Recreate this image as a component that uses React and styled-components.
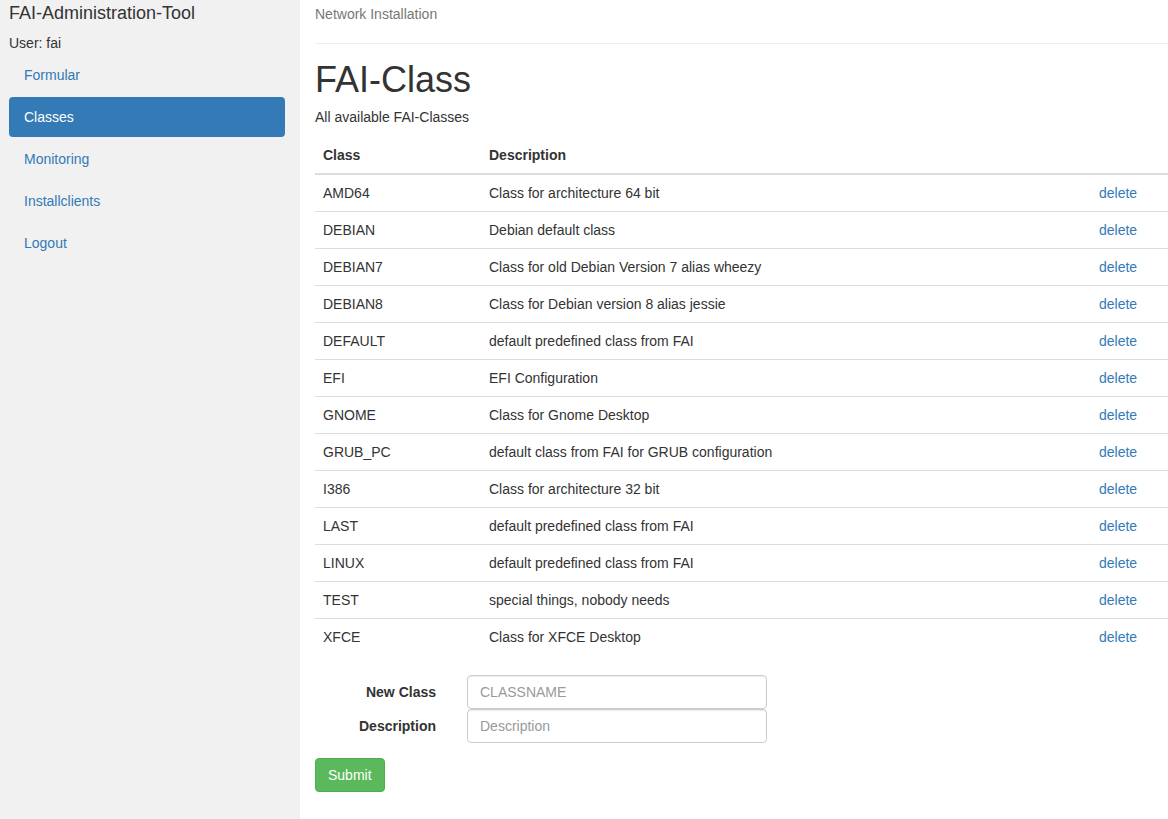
import React from 'react'
import styled, { createGlobalStyle } from 'styled-components'

const classes = [
  ['AMD64', 'Class for architecture 64 bit'],
  ['DEBIAN', 'Debian default class'],
  ['DEBIAN7', 'Class for old Debian Version 7 alias wheezy'],
  ['DEBIAN8', 'Class for Debian version 8 alias jessie'],
  ['DEFAULT', 'default predefined class from FAI'],
  ['EFI', 'EFI Configuration'],
  ['GNOME', 'Class for Gnome Desktop'],
  ['GRUB_PC', 'default class from FAI for GRUB configuration'],
  ['I386', 'Class for architecture 32 bit'],
  ['LAST', 'default predefined class from FAI'],
  ['LINUX', 'default predefined class from FAI'],
  ['TEST', 'special things, nobody needs'],
  ['XFCE', 'Class for XFCE Desktop'],
]

const navItems = ['Formular', 'Classes', 'Monitoring', 'Installclients', 'Logout']

export default function App() {
  return (
    <Page>
      <GlobalStyle />
      <Sidebar>
        <Brand>FAI-Administration-Tool</Brand>
        <UserLine>User: fai</UserLine>
        <Nav>
          {navItems.map(item => (
            <Pill key={item} $active={item === 'Classes'}>{item}</Pill>
          ))}
        </Nav>
      </Sidebar>

      <Main>
        <Crumb>Network Installation</Crumb>
        <Rule />
        <Title>FAI-Class</Title>
        <Lead>All available FAI-Classes</Lead>

        <Table>
          <colgroup>
            <col width="166" />
            <col />
            <col width="77" />
          </colgroup>
          <thead>
            <tr>
              <Th>Class</Th>
              <Th>Description</Th>
              <Th></Th>
            </tr>
          </thead>
          <tbody>
            {classes.map(([name, desc]) => (
              <tr key={name}>
                <Td>{name}</Td>
                <Td>{desc}</Td>
                <Td><Link href="#">delete</Link></Td>
              </tr>
            ))}
          </tbody>
        </Table>

        <Form onSubmit={e => e.preventDefault()}>
          <Label>New Class</Label>
          <Input placeholder="CLASSNAME" />
          <Label>Description</Label>
          <Input placeholder="Description" />
        </Form>
        <SubmitButton>Submit</SubmitButton>
      </Main>
    </Page>
  )
}

const GlobalStyle = createGlobalStyle`
  html, body {
    margin: 0;
    padding: 0;
    background: #fff;
  }
  body {
    font-family: "Liberation Sans", Arial, sans-serif;
    font-size: 14px;
    line-height: 20px;
    color: #333;
  }
  * {
    box-sizing: border-box;
  }
`

const Page = styled.div`
  display: flex;
  min-height: 100vh;
`

const Sidebar = styled.aside`
  width: 300px;
  flex-shrink: 0;
  background: #f1f1f1;
  padding: 0 15px 0 9px;
`

const Brand = styled.div`
  font-size: 18px;
  line-height: 20px;
  padding-top: 3px;
`

const UserLine = styled.div`
  margin-top: 10px;
`

const Nav = styled.nav`
  margin-top: 2px;
  display: flex;
  flex-direction: column;
  gap: 2px;
`

const Pill = styled.a`
  display: block;
  padding: 10px 15px;
  border-radius: 4px;
  color: ${p => (p.$active ? '#fff' : '#337ab7')};
  background: ${p => (p.$active ? '#337ab7' : 'transparent')};
  text-decoration: none;
  cursor: pointer;
`

const Main = styled.main`
  flex: 1;
  padding: 4px 0 0 15px;
  min-width: 0;
`

const Crumb = styled.div`
  color: #777;
`

const Rule = styled.hr`
  margin: 19px 0 0;
  border: 0;
  border-top: 1px solid #eee;
`

const Title = styled.h1`
  font-size: 36px;
  font-weight: 500;
  line-height: 40px;
  margin: 16px 0 0;
`

const Lead = styled.p`
  margin: 7px 0 10px;
`

const Table = styled.table`
  width: 100%;
  table-layout: fixed;
  border-collapse: collapse;
  border-spacing: 0;
`

const Th = styled.th`
  text-align: left;
  font-weight: bold;
  padding: 8px;
  line-height: 20px;
  border-bottom: 2px solid #ddd;
`

const Td = styled.td`
  padding: 8px;
  line-height: 20px;
  border-top: 1px solid #ddd;
`

const Link = styled.a`
  color: #337ab7;
  text-decoration: none;
`

const Form = styled.form`
  display: grid;
  grid-template-columns: 121px 300px;
  column-gap: 31px;
  align-items: center;
  margin-top: 20px;
`

const Label = styled.label`
  text-align: right;
  font-weight: bold;
`

const Input = styled.input`
  height: 34px;
  padding: 6px 12px;
  font-family: "Liberation Sans", Arial, sans-serif;
  font-size: 14px;
  color: #555;
  border: 1px solid #ccc;
  border-radius: 4px;
  box-shadow: inset 0 1px 1px rgba(0, 0, 0, 0.075);
  &::placeholder {
    color: #999;
  }
`

const SubmitButton = styled.button`
  margin-top: 15px;
  height: 34px;
  padding: 6px 12px;
  font-family: "Liberation Sans", Arial, sans-serif;
  font-size: 14px;
  color: #fff;
  background: #5cb85c;
  border: 1px solid #4cae4c;
  border-radius: 4px;
  cursor: pointer;
`
